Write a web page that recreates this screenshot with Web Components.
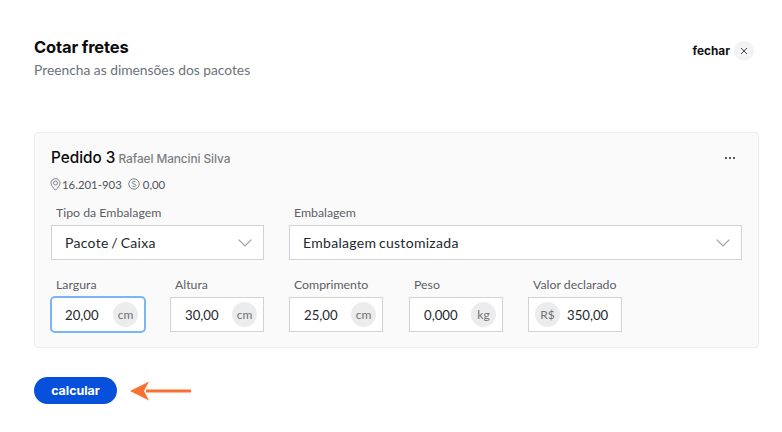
<!DOCTYPE html>
<html lang="pt">
<head>
<meta charset="utf-8">
<title>Cotar fretes</title>
<style>
	html, body { margin: 0; background: #fff; }
	body { width: 782px; height: 432px; overflow: hidden; font-family: "Lato", "Noto Sans", sans-serif; }
</style>
</head>
<body>
<frete-page></frete-page>
<script>
(function() {
	const HEAD = '"Inter", "Liberation Sans", sans-serif';

	class FreteHeader extends HTMLElement {
		constructor() {
			super();
			this.attachShadow({mode: "open"}).innerHTML = `
				<style>
				:host { display: flex; justify-content: space-between; align-items: flex-start; padding: 37px 28px 0 34px; height: 95px; box-sizing: content-box; }
				h1 { margin: 0; font: 700 16.5px/21px ${HEAD}; color: #0b0b0b; letter-spacing: -0.15px; }
				p { margin: 3px 0 0; font-size: 13.8px; line-height: 18px; color: #6d7278; }
				.close { display: flex; align-items: center; gap: 4px; margin-top: 4px; font: 700 11.8px/20px ${HEAD}; color: #111; }
				.x { width: 20px; height: 20px; border-radius: 50%; background: #f3f3f3; display: flex; align-items: center; justify-content: center; }
				</style>
				<div>
					<h1>Cotar fretes</h1>
					<p>Preencha as dimensões dos pacotes</p>
				</div>
				<div class="close">fechar
					<span class="x"><svg width="8" height="8" viewBox="0 0 8 8"><path d="M1 1l6 6M7 1L1 7" stroke="#3c4654" stroke-width="1" fill="none"/></svg></span>
				</div>`;
		}
	}

	class FreteSelect extends HTMLElement {
		constructor() {
			super();
			this.attachShadow({mode: "open"}).innerHTML = `
				<style>
				:host { display: block; }
				label { display: block; padding-left: 5px; font-size: 12.3px; line-height: 16px; color: #5c6066; margin-bottom: 4px; }
				.box { height: 35px; box-sizing: border-box; border: 1px solid #d2d2d2; background: #fff; display: flex; align-items: center; justify-content: space-between; padding: 0 11px 0 13px; font-size: 14px; color: #24282c; letter-spacing: .3px; word-spacing: -1.2px; }
				</style>
				<label>${this.getAttribute("label")}</label>
				<div class="box"><span><slot></slot></span>
					<svg width="14" height="8" viewBox="0 0 14 8"><path d="M.7.7L7 7l6.3-6.3" stroke="#9a9a9a" stroke-width="1.1" fill="none"/></svg>
				</div>`;
		}
	}

	class FreteInput extends HTMLElement {
		constructor() {
			super();
			const prefix = this.hasAttribute("prefix");
			const unit = `<span class="unit">${this.getAttribute("unit")}</span>`;
			this.attachShadow({mode: "open"}).innerHTML = `
				<style>
				:host { display: block; width: 94px; }
				label { display: block; padding-left: 5px; font-size: 12.3px; line-height: 16px; color: #5c6066; margin-bottom: 4px; }
				.box { height: 35px; box-sizing: border-box; border: 1px solid #d2d2d2; background: #fff; display: flex; align-items: center; justify-content: space-between; padding: 0 6px 0 14px; font-size: 13.2px; color: #24282c; }
				.box.pre { padding: 0 6px; justify-content: flex-start; gap: 7px; }
				:host([focused]) .box { border: 2px solid #7db4f7; border-radius: 5px; margin: -1px 0 -1px -1px; height: 37px; width: 96px; padding-left: 13px; }
				.unit { width: 25px; height: 25px; border-radius: 50%; background: #ececec; color: #6f7276; font-size: 12px; display: flex; align-items: center; justify-content: center; }
				</style>
				<label>${this.getAttribute("label")}</label>
				<div class="box ${prefix ? "pre" : ""}">
					${prefix ? unit : ""}<span><slot></slot></span>${prefix ? "" : unit}
				</div>`;
		}
	}

	class PedidoCard extends HTMLElement {
		constructor() {
			super();
			this.attachShadow({mode: "open"}).innerHTML = `
				<style>
				:host { display: block; margin: 0 23px 0 34px; height: 216px; box-sizing: border-box; border: 1px solid #ececec; border-radius: 4px; background: #fafafa; padding: 15px 16px 0 16px; }
				.top { display: flex; justify-content: space-between; align-items: center; height: 20px; }
				.name { font: 500 15.3px/20px ${HEAD}; color: #0b0b0b; }
				.name small { font: 500 11.9px/20px ${HEAD}; color: #7c7f83; margin-left: -1px; letter-spacing: -0.1px; }
				.more { display: flex; gap: 1.5px; padding-right: 7px; }
				.more i { width: 2.5px; height: 2.5px; border-radius: 50%; background: #1b2430; }
				.meta { display: flex; align-items: center; margin: 8px 0 0 -1px; height: 16px; font-size: 11.4px; color: #4f5358; }
				.meta svg { margin-right: 1px; }
				.meta span { margin-right: 6px; }
				.row { display: grid; }
				.r1 { grid-template-columns: 213px 453px; column-gap: 25px; margin-top: 13px; }
				.r2 { grid-template-columns: 94px 94px 95px 94px 94px; column-gap: 25px; margin-top: 17px; }
				</style>
				<div class="top">
					<div class="name">Pedido 3 <small>Rafael Mancini Silva</small></div>
					<div class="more"><i></i><i></i><i></i></div>
				</div>
				<div class="meta">
					<svg width="11" height="13" viewBox="0 0 11 13" fill="none" stroke="#6d7278" stroke-width=".9"><path d="M5.5 12.2C3.4 9.9 1 7.7 1 5.1a4.5 4.5 0 0 1 9 0c0 2.6-2.4 4.8-4.5 7.1z"/><circle cx="5.5" cy="5" r="2"/></svg>
					<span>16.201-903</span>
					<svg width="12" height="12" viewBox="0 0 12 12" fill="none" stroke="#6d7278" stroke-width=".9"><circle cx="6" cy="6" r="5.2"/><path d="M7.8 4.4C7.5 3.6 6.8 3.3 6 3.3c-1 0-1.8.5-1.8 1.3 0 1.8 3.6.9 3.6 2.8 0 .8-.8 1.3-1.8 1.3-.9 0-1.6-.4-1.9-1.1"/></svg>
					<span style="margin-left:2px">0,00</span>
				</div>
				<div class="row r1"><slot name="selects"></slot></div>
				<div class="row r2"><slot name="inputs"></slot></div>`;
		}
	}

	class FreteAction extends HTMLElement {
		constructor() {
			super();
			this.attachShadow({mode: "open"}).innerHTML = `
				<style>
				:host { display: flex; align-items: center; gap: 13px; margin: 29px 0 0 34px; height: 27px; }
				button { width: 83px; height: 27px; border: 0; border-radius: 14px; background: #0650dc; color: #fff; font: 700 12.4px/27px ${HEAD}; padding: 0; }
				</style>
				<button>calcular</button>
				<svg width="62" height="22" viewBox="0 0 62 22"><path d="M16 9.6H61v3H16z" fill="#f97030"/><path d="M0 11L19 1.5 14 11 19 20.5z" fill="#f97030"/></svg>`;
		}
	}

	class FretePage extends HTMLElement {
		constructor() {
			super();
			this.attachShadow({mode: "open"}).innerHTML = `
				<style>:host { display: block; }</style>
				<frete-header></frete-header>
				<pedido-card>
					<frete-select slot="selects" label="Tipo da Embalagem">Pacote / Caixa</frete-select>
					<frete-select slot="selects" label="Embalagem">Embalagem customizada</frete-select>
					<frete-input slot="inputs" label="Largura" unit="cm" focused>20,00</frete-input>
					<frete-input slot="inputs" label="Altura" unit="cm">30,00</frete-input>
					<frete-input slot="inputs" label="Comprimento" unit="cm">25,00</frete-input>
					<frete-input slot="inputs" label="Peso" unit="kg">0,000</frete-input>
					<frete-input slot="inputs" label="Valor declarado" unit="R$" prefix>350,00</frete-input>
				</pedido-card>
				<frete-action></frete-action>`;
		}
	}

	customElements.define("frete-header", FreteHeader);
	customElements.define("frete-select", FreteSelect);
	customElements.define("frete-input", FreteInput);
	customElements.define("pedido-card", PedidoCard);
	customElements.define("frete-action", FreteAction);
	customElements.define("frete-page", FretePage);
})();
</script>
</body>
</html>
